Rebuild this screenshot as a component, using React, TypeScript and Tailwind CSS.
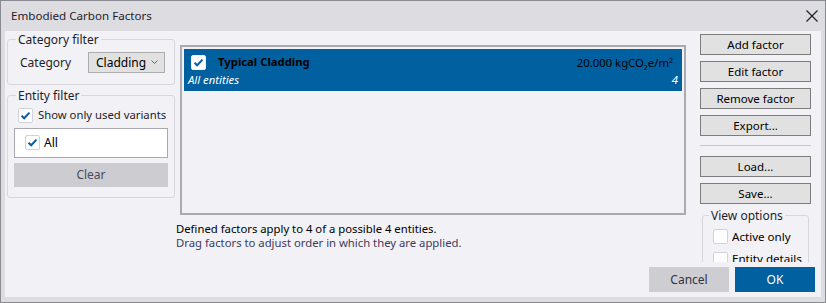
import React from "react";

function Check({ checked, className = "" }: { checked?: boolean; className?: string }) {
  return (
    <span
      className={`inline-flex items-center justify-center w-[15px] h-[15px] bg-white border border-[#d2d2da] rounded-[2px] shrink-0 ${className}`}
    >
      {checked && (
        <svg width="11" height="11" viewBox="0 0 11 11">
          <path d="M1.5 5.8 L4.2 8.3 L9.5 2.6" fill="none" stroke="#0a5f9e" strokeWidth="2" />
        </svg>
      )}
    </span>
  );
}

function SideButton({ label }: { label: string }) {
  return (
    <button className="h-[21px] w-full bg-[#e1e1e1] border border-[#7c7c7c] text-[11.5px] leading-none text-black">
      {label}
    </button>
  );
}

export default function App() {
  return (
    <div className="w-[826px] h-[303px] border border-[#8a8a92] bg-[#dcdce1] flex flex-col font-['Noto_Sans',sans-serif] text-[11.3px] text-black overflow-hidden whitespace-nowrap">
      {/* Title bar */}
      <div className="h-[30px] shrink-0 flex items-center justify-between pl-[10px] pr-[7px]">
        <span className="text-[11.6px] text-[#1e1e2a]">Embodied Carbon Factors</span>
        <svg width="12" height="12" viewBox="0 0 12 12">
          <path d="M0.5 0.5 L11.5 11.5 M11.5 0.5 L0.5 11.5" stroke="#222" strokeWidth="1.2" />
        </svg>
      </div>

      {/* Client area */}
      <div className="flex-1 mx-[4px] mb-[5px] bg-[#f1f1f6] flex flex-col">
        <div className="flex h-[231px] overflow-hidden">
          {/* Left column */}
          <div className="w-[171px] shrink-0 pl-[2px] pt-[1px] flex flex-col gap-[3px]">
            <fieldset className="w-[168px] h-[53px] border border-[#d6d6dc] rounded-[3px] px-[6px]">
              <legend className="px-[2px] ml-[2px] leading-[15px] text-[12px] text-[#1e1e2a]">Category filter</legend>
              <div className="flex items-center mt-[5px]">
                <span className="w-[74px] pl-[6px] text-[12px] text-[#1e1e2a]">Category</span>
                <div className="w-[77px] h-[21px] bg-[#e1e1e1] border border-[#adadad] flex items-center justify-between pl-[7px] pr-[6px]">
                  <span className="text-[12px]">Cladding</span>
                  <svg width="7" height="5" viewBox="0 0 7 5">
                    <path d="M0.5 0.5 L3.5 3.5 L6.5 0.5" fill="none" stroke="#666" strokeWidth="1" />
                  </svg>
                </div>
              </div>
            </fieldset>

            <fieldset className="w-[168px] h-[110px] border border-[#d6d6dc] rounded-[3px] px-[6px]">
              <legend className="px-[2px] ml-[2px] leading-[15px] text-[12px] text-[#1e1e2a]">Entity filter</legend>
              <div className="flex items-center gap-[5px] mt-[4px] pl-[4px]">
                <Check checked />
                <span className="text-[#1e1e2a]">Show only used variants</span>
              </div>
              <div className="mt-[4px] h-[30px] bg-white border border-[#a8a8b0] flex items-center gap-[4px] pl-[10px]">
                <Check checked />
                <span className="text-[12px]">All</span>
              </div>
              <button className="mt-[5px] w-full h-[24px] bg-[#ccccd1] text-[12px] text-[#4a4a5e]">Clear</button>
            </fieldset>
          </div>

          {/* Middle column */}
          <div className="w-[510px] shrink-0 flex flex-col">
            <div className="ml-[4px] mt-[14px] w-[506px] h-[170px] border-2 border-[#a9a9b0] bg-[#f1f1f6] p-[2px]">
              <div className="h-[42px] bg-[#0060a0] flex flex-col justify-center px-[4px]">
                <div className="flex items-center h-[21px]">
                  <Check checked className="ml-[3px] border-[#f0f0f0]" />
                  <span className="ml-[12px] font-bold text-black">Typical Cladding</span>
                  <span className="ml-auto mr-[5px] text-black leading-none">
                    20.000 kgCO
                    <span className="inline-block text-[7px] leading-none translate-y-[3px]">2</span>
                    e/m
                    <span className="inline-block text-[7px] leading-none -translate-y-[4px]">2</span>
                  </span>
                </div>
                <div className="flex items-center h-[15px] italic text-white">
                  <span>All entities</span>
                  <span className="ml-auto">4</span>
                </div>
              </div>
            </div>
            <div className="mt-[7px] leading-[14px]">Defined factors apply to 4 of a possible 4 entities.</div>
            <div className="leading-[14px] text-[#3c3c5c]">Drag factors to adjust order in which they are applied.</div>
          </div>

          {/* Right column */}
          <div className="ml-[14px] w-[111px] shrink-0 flex flex-col pt-[3px]">
            <div className="flex flex-col gap-[6px]">
              <SideButton label="Add factor" />
              <SideButton label="Edit factor" />
              <SideButton label="Remove factor" />
              <SideButton label="Export..." />
            </div>
            <div className="mt-[9px] h-px shrink-0 bg-[#c6c6cc]" />
            <div className="mt-[10px] flex flex-col gap-[6px]">
              <SideButton label="Load..." />
              <SideButton label="Save..." />
            </div>
            <fieldset className="mt-[4px] ml-[2px] w-[107px] min-w-0 h-[70px] shrink-0 border border-[#d6d6dc] rounded-[3px] pl-[10px] pr-0 overflow-hidden">
              <legend className="px-[2px] -ml-[4px] leading-[15px] text-[12px] text-[#1e1e2a]">View options</legend>
              <div className="flex items-center gap-[4px] mt-[5px]">
                <Check />
                <span className="text-[11.6px]">Active only</span>
              </div>
              <div className="flex items-center gap-[4px] mt-[5px]">
                <Check />
                <span className="text-[11.6px]">Entity details</span>
              </div>
            </fieldset>
          </div>
        </div>

        {/* Dialog buttons */}
        <div className="mt-[5px] flex justify-end gap-[6px] pr-[6px]">
          <button className="w-[80px] h-[25px] bg-[#cdcdd2] text-[12px] text-[#333344]">Cancel</button>
          <button className="w-[80px] h-[25px] bg-[#0060a0] text-[12px] text-white">OK</button>
        </div>
      </div>
    </div>
  );
}
